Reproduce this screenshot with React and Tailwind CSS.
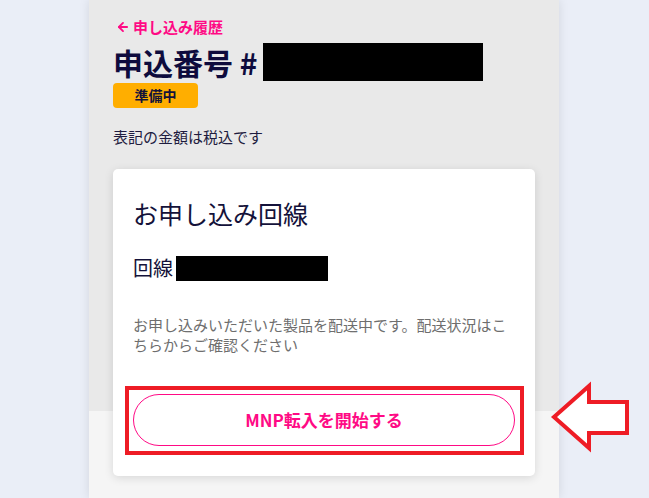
import { ArrowLeft } from "lucide-react";

const jp = { fontFamily: '"Noto Sans CJK JP", "Noto Sans", sans-serif' };

function PointerArrow() {
  return (
    <svg
      className="absolute left-[549px] top-[380px]"
      width="84"
      height="74"
      viewBox="549 380 84 74"
    >
      <polygon
        points="554,417 589,386 589,402 627,402 627,433 589,433 589,448"
        fill="#ffffff"
        stroke="#ee1c25"
        strokeWidth="4"
        strokeLinejoin="miter"
      />
    </svg>
  );
}

export default function App() {
  return (
    <main
      className="relative h-[498px] w-full overflow-hidden bg-[#eaeef7]"
      style={jp}
    >
      <div className="ml-[89px] h-full w-[470px] bg-[linear-gradient(to_bottom,#e9e9e9_411px,#f5f5f5_411px)] px-6 pt-[17px] shadow-[0_0_10px_rgba(0,0,0,0.10)]">
        <a className="flex h-5 items-center gap-[3px] pl-[3px] text-[15px] font-bold leading-5 text-[#ff0a85]">
          <ArrowLeft size={14} strokeWidth={3.2} />
          <span>申し込み履歴</span>
        </a>

        <h1 className="mt-[7px] flex h-[36px] items-center text-[30px] font-bold leading-9 text-[#0e0b3d]">
          <span>申込番号 #</span>
          <span className="ml-[5px] inline-block h-[38px] w-[220px] bg-black" />
        </h1>

        <div className="mt-[3px] flex h-[25px] w-[85px] items-center justify-center rounded-[4px] bg-[#ffae00] text-[14px] font-bold text-[#14123a]">
          準備中
        </div>

        <p className="mt-[19px] text-[15px] leading-5 text-[#1e1c40]">
          表記の金額は税込です
        </p>

        <section className="mt-[22px] w-[422px] rounded-[5px] bg-white px-5 pb-[30px] pt-[28px] shadow-[0_2px_10px_rgba(0,0,0,0.12)]">
          <h2 className="text-[25px] leading-8 text-[#14123a]">
            お申し込み回線
          </h2>

          <div className="mt-[25px] flex h-7 items-center text-[20px] leading-7 text-[#14123a]">
            <span>回線</span>
            <span className="ml-[3px] inline-block h-[25px] w-[152px] bg-black" />
          </div>

          <p className="mt-[33px] text-[15px] leading-5 text-[#6e6e6e]">
            お申し込みいただいた製品を配送中です。配送状況はこちらからご確認ください
          </p>

          <div className="relative mt-[39px]">
            <button className="flex h-[52px] w-full items-center justify-center rounded-full border border-[#ff0a85] bg-white text-[17px] font-bold text-[#ff0a85]">
              MNP転入を開始する
            </button>
            <div className="pointer-events-none absolute -bottom-[9px] -left-[8px] -right-[9px] -top-[8px] border-4 border-[#ee1c25]" />
          </div>
        </section>
      </div>

      <PointerArrow />
    </main>
  );
}
